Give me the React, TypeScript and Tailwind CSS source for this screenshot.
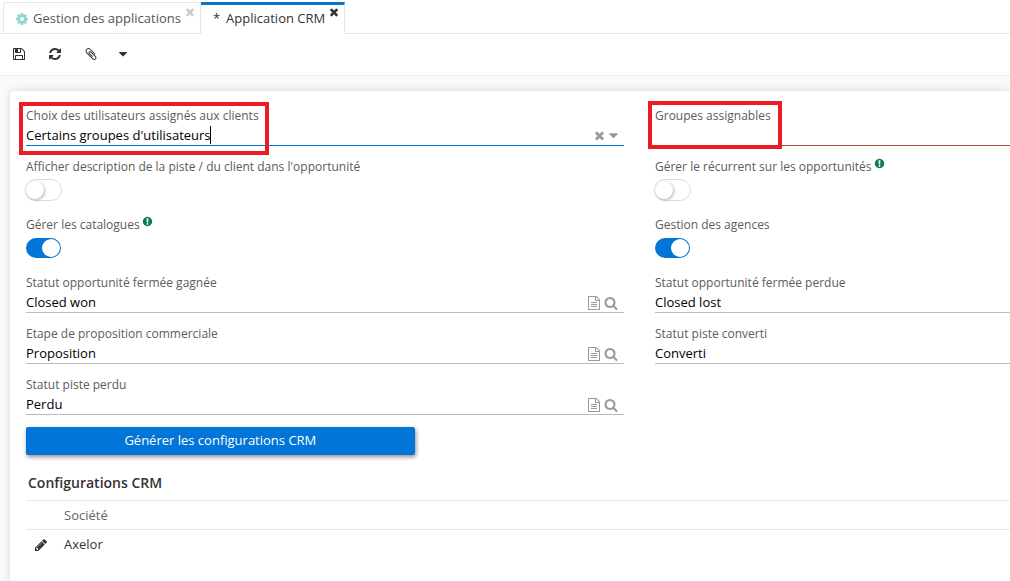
import React, { ReactNode, useId, useState } from "react";

const paths = {
  times:
    "M1490 1322q0 40-28 68l-136 136q-28 28-68 28t-68-28l-294-294-294 294q-28 28-68 28t-68-28l-136-136q-28-28-28-68t28-68l294-294-294-294q-28-28-28-68t28-68l136-136q28-28 68-28t68 28l294 294 294-294q28-28 68-28t68 28l136 136q28 28 28 68t-28 68l-294 294 294 294q28 28 28 68z",
  search:
    "M1216 832q0-185-131.5-316.5t-316.5-131.5-316.5 131.5-131.5 316.5 131.5 316.5 316.5 131.5 316.5-131.5 131.5-316.5zm512 832q0 52-38 90t-90 38q-54 0-90-38l-343-342q-179 124-399 124-143 0-273.5-55.5t-225-150-150-225-55.5-273.5 55.5-273.5 150-225 225-150 273.5-55.5 273.5 55.5 225 150 150 225 55.5 273.5q0 220-124 399l343 343q37 37 37 90z",
  refresh:
    "M1639 1056q0 5-1 7-64 268-268 434.5t-478 166.5q-146 0-282.5-55t-243.5-157l-129 129q-19 19-45 19t-45-19-19-45v-448q0-26 19-45t45-19h448q26 0 45 19t19 45-19 45l-137 137q71 66 161 102t187 36q134 0 250-65t186-179q11-17 53-117 8-23 30-23h192q13 0 22.5 9.5t9.5 22.5zm25-800v448q0 26-19 45t-45 19h-448q-26 0-45-19t-19-45 19-45l138-138q-148-137-349-137-134 0-250 65t-186 179q-11 17-53 117-8 23-30 23h-199q-13 0-22.5-9.5t-9.5-22.5v-7q65-268 270-434.5t480-166.5q146 0 284 55.5t245 156.5l130-129q19-19 45-19t45 19 19 45z",
  cog: "M1152 896q0-106-75-181t-181-75-181 75-75 181 75 181 181 75 181-75 75-181zm512-109v222q0 12-8 23t-20 13l-185 28q-19 54-39 91 35 50 107 138 10 12 10 25t-9 23q-27 37-99 108t-94 71q-12 0-26-9l-138-108q-44 23-91 38-16 136-29 186-7 28-36 28h-222q-14 0-24.5-8.5t-11.5-21.5l-28-184q-49-16-90-37l-141 107q-10 9-25 9-14 0-25-11-126-114-165-168-7-10-7-23 0-12 8-23 15-21 51-66.5t54-70.5q-27-50-41-99l-183-27q-13-2-21-12.5t-8-23.5v-222q0-12 8-23t19-13l186-28q14-46 39-92-40-57-107-138-10-12-10-24 0-10 9-23 26-36 98.5-107.5t94.5-71.5q13 0 26 10l138 107q44-23 91-38 16-136 29-186 7-28 36-28h222q14 0 24.5 8.5t11.5 21.5l28 184q49 16 90 37l142-107q9-9 24-9 13 0 25 10 129 119 165 170 7 8 7 22 0 12-8 23-15 21-51 66.5t-54 70.5q26 50 41 98l183 28q13 2 21 12.5t8 23.5z",
  save: "M512 1536h768v-384h-768v384zm896 0h128v-896q0-14-10-38.5t-20-34.5l-281-281q-10-10-34-20t-39-10v416q0 40-28 68t-68 28h-576q-40 0-68-28t-28-68v-416h-128v1280h128v-416q0-40 28-68t68-28h832q40 0 68 28t28 68v416zm-384-928v-320q0-13-9.5-22.5t-22.5-9.5h-192q-13 0-22.5 9.5t-9.5 22.5v320q0 13 9.5 22.5t22.5 9.5h192q13 0 22.5-9.5t9.5-22.5zm640 32v928q0 40-28 68t-68 28h-1344q-40 0-68-28t-28-68v-1344q0-40 28-68t68-28h928q40 0 88 20t76 48l280 280q28 28 48 76t20 88z",
  file: "M1596 380q28 28 48 76t20 88v1152q0 40-28 68t-68 28h-1344q-40 0-68-28t-28-68v-1600q0-40 28-68t68-28h896q40 0 88 20t76 48zm-444-244v376h376q-10-29-22-41l-313-313q-12-12-41-22zm384 1528v-1024h-416q-40 0-68-28t-28-68v-416h-768v1536h1280zm-1024-864q0-14 9-23t23-9h704q14 0 23 9t9 23v64q0 14-9 23t-23 9h-704q-14 0-23-9t-9-23v-64zm736 224q14 0 23 9t9 23v64q0 14-9 23t-23 9h-704q-14 0-23-9t-9-23v-64q0-14 9-23t23-9h704zm0 256q14 0 23 9t9 23v64q0 14-9 23t-23 9h-704q-14 0-23-9t-9-23v-64q0-14 9-23t23-9h704z",
  pencil:
    "M491 1536l91-91-235-235-91 91v107h128v128h107zm523-928q0-22-22-22-10 0-17 7l-542 542q-7 7-7 17 0 22 22 22 10 0 17-7l542-542q7-7 7-17zm-54-192l416 416-832 832h-416v-416zm683 96q0 53-37 90l-166 166-416-416 166-165q36-38 90-38 53 0 91 38l235 234q37 39 37 91z",
  paperclip:
    "M1596 1385q0 117-79 196t-196 79q-135 0-235-100l-777-776q-113-115-113-271 0-159 110-270t269-111q158 0 273 113l605 606q10 10 10 22 0 16-30.5 46.5t-46.5 30.5q-13 0-23-10l-606-607q-79-77-181-77-106 0-179 75t-73 181q0 105 76 181l776 777q63 63 145 63 64 0 106-42t42-106q0-82-63-145l-581-581q-26-24-60-24-29 0-48 19t-19 48q0 32 25 59l410 410q10 10 10 22 0 16-31 47t-47 31q-12 0-22-10l-410-410q-63-61-63-149 0-82 57-139t139-57q88 0 149 63l581 581q100 98 100 235z",
  info: "M896 128q209 0 385.5 103t279.5 279.5 103 385.5-103 385.5-279.5 279.5-385.5 103-385.5-103-279.5-279.5-103-385.5 103-385.5 279.5-279.5 385.5-103zm128 1247v-190q0-14-9-23.5t-22-9.5h-192q-13 0-23 10t-10 23v190q0 13 10 23t23 10h192q13 0 22-9.5t9-23.5zm-2-344l18-621q0-12-10-18-10-8-24-8h-220q-14 0-24 8-10 6-10 18l17 621q0 10 10 17.5t24 7.5h185q14 0 23.5-7.5t10.5-17.5z",
  caret:
    "M1408 704q0 26-19 45l-448 448q-19 19-45 19t-45-19l-448-448q-19-19-19-45t19-45 45-19h896q26 0 45 19t19 45z",
};

function Icon({ name, className }: { name: keyof typeof paths; className: string }) {
  return (
    <svg viewBox="0 0 1792 1792" className={`shrink-0 fill-current ${className}`} aria-hidden="true">
      <path d={paths[name]} />
    </svg>
  );
}

function IconButton({ label, children, className = "" }: { label: string; children: ReactNode; className?: string }) {
  return (
    <button type="button" aria-label={label} className={`flex items-center justify-center ${className}`}>
      {children}
    </button>
  );
}

const lineColors = {
  normal: "border-[#bbbbbb]",
  focus: "border-[#0275d8]",
  error: "border-[#b94a48]",
};

function TextField({
  label,
  value,
  line = "normal",
  actions,
  overlay,
}: {
  label: string;
  value: string;
  line?: keyof typeof lineColors;
  actions?: ReactNode;
  overlay?: ReactNode;
}) {
  const id = useId();
  const [text, setText] = useState(value);
  return (
    <div className="relative">
      <label htmlFor={id} className="block h-5 text-[12px] leading-5 text-[#5c5c5c]">
        {label}
      </label>
      <div className={`flex h-5 items-center border-b ${lineColors[line]}`}>
        <input
          id={id}
          value={text}
          onChange={(e) => setText(e.target.value)}
          className="h-full min-w-0 flex-1 bg-transparent pb-[2px] text-black outline-none"
        />
        {actions}
      </div>
      {overlay}
    </div>
  );
}

function Toggle({ label, on = false, help = false }: { label: string; on?: boolean; help?: boolean }) {
  const id = useId();
  return (
    <div className="h-[47px]">
      <div className="flex h-5 gap-[2px]">
        <label htmlFor={id} className="text-[12px] leading-5 text-[#5c5c5c]">
          {label}
        </label>
        {help && <Icon name="info" className="mt-px size-[11px] text-[#0b7d4b]" />}
      </div>
      <input
        id={id}
        type="checkbox"
        role="switch"
        defaultChecked={on}
        className="-ml-px mt-[2px] block h-[22px] w-[37px] appearance-none rounded-full border border-[#dddddd] bg-white before:block before:size-[18px] before:translate-y-px before:rounded-full before:bg-white before:shadow-[1px_1px_3px_rgba(0,0,0,0.3)] checked:border-transparent checked:bg-[#0275d8] checked:bg-clip-padding checked:before:translate-x-4 checked:before:shadow-none"
      />
    </div>
  );
}

const lookupActions = (
  <div className="flex gap-[3px] pr-[6px] text-[#999999]">
    <IconButton label="Ouvrir">
      <Icon name="file" className="size-[14px]" />
    </IconButton>
    <IconButton label="Rechercher">
      <Icon name="search" className="size-[14px]" />
    </IconButton>
  </div>
);

export default function App() {
  return (
    <div className="flex min-h-screen flex-col overflow-x-hidden bg-[#fafafa] font-['Open_Sans',sans-serif] text-[13px] text-[#333333]">
      <nav className="flex h-[34px] items-stretch border-b border-[#e7e7e7] bg-white pl-[3px]">
        <div className="mt-[2px] flex rounded-tl-xs border border-b-0 border-[#e7e7e7] pl-[11px] pr-1">
          <a href="#applications" className="flex items-center gap-1 pt-px text-[#555555]">
            <Icon name="cog" className="size-[14px] text-[#8fd6d0]" />
            Gestion des applications
          </a>
          <IconButton label="Fermer Gestion des applications" className="ml-[3px] mt-[3px] h-3 text-[#cccccc]">
            <Icon name="times" className="size-[12px]" />
          </IconButton>
        </div>
        <div className="-mb-px mt-[2px] flex border-r border-t-3 border-r-[#e7e7e7] border-t-[#0275d8] bg-white pl-3 pr-1">
          <a href="#crm" aria-current="page" className="flex items-center gap-[6px] pb-px">
            <span>*</span>
            Application CRM
          </a>
          <IconButton label="Fermer Application CRM" className="ml-[3px] mt-px h-3">
            <Icon name="times" className="size-[12px]" />
          </IconButton>
        </div>
      </nav>

      <div className="flex h-[42px] items-center gap-[22px] border-b border-[#eeeeee] bg-white pb-[2px] pl-3">
        <IconButton label="Enregistrer">
          <Icon name="save" className="size-[14px]" />
        </IconButton>
        <IconButton label="Actualiser">
          <Icon name="refresh" className="size-[14px]" />
        </IconButton>
        <IconButton label="Pièces jointes">
          <Icon name="paperclip" className="size-[14px]" />
        </IconButton>
        <IconButton label="Plus" className="-ml-1">
          <Icon name="caret" className="size-[14px]" />
        </IconButton>
      </div>

      <main className="ml-[10px] mt-[15px] flex-1 rounded-tl-sm bg-white pl-4 pt-[15px] shadow-[0_0_8px_rgba(0,0,0,0.15)]">
        <form onSubmit={(e) => e.preventDefault()} className="grid grid-cols-[598fr_355fr] gap-x-[31px] gap-y-[11px]">
          <TextField
            label="Choix des utilisateurs assignés aux clients"
            value="Certains groupes d'utilisateurs"
            line="focus"
            actions={
              <div className="flex pr-[3px] text-[#999999]">
                <IconButton label="Effacer">
                  <Icon name="times" className="size-[13px]" />
                </IconButton>
                <IconButton label="Afficher les choix">
                  <Icon name="caret" className="size-[15px]" />
                </IconButton>
              </div>
            }
            overlay={
              <>
                <span className="absolute left-[184px] top-5 h-[18px] w-px bg-black" />
                <span className="pointer-events-none absolute -left-[7px] -top-1 h-[53px] w-[250px] border-4 border-[#ed1c24]" />
              </>
            }
          />
          <TextField
            label="Groupes assignables"
            value=""
            line="error"
            overlay={
              <span className="pointer-events-none absolute -left-[7px] -top-[5px] h-12 w-[134px] border-4 border-[#ed1c24]" />
            }
          />
          <Toggle label="Afficher description de la piste / du client dans l'opportunité" />
          <Toggle label="Gérer le récurrent sur les opportunités" help />
          <Toggle label="Gérer les catalogues" on help />
          <Toggle label="Gestion des agences" on />
          <TextField label="Statut opportunité fermée gagnée" value="Closed won" actions={lookupActions} />
          <TextField label="Statut opportunité fermée perdue" value="Closed lost" />
          <TextField label="Etape de proposition commerciale" value="Proposition" actions={lookupActions} />
          <TextField label="Statut piste converti" value="Converti" />
          <TextField label="Statut piste perdu" value="Perdu" actions={lookupActions} />
          <button
            type="button"
            className="col-start-1 mt-px h-7 w-[65%] rounded-xs bg-[#0275d8] pb-px text-white shadow-[1px_2px_4px_rgba(0,0,0,0.45)]"
          >
            Générer les configurations CRM
          </button>
        </form>

        <section className="mt-4">
          <h2 className="h-[29px] pl-[2px] text-[14px] font-semibold leading-6">Configurations CRM</h2>
          <table className="w-full border-collapse text-left">
            <thead>
              <tr className="h-[29px] border-y border-[#e7e7e7]">
                <th className="w-[38px]" aria-label="Actions" />
                <th className="pt-[2px] font-normal text-[#666666]">Société</th>
              </tr>
            </thead>
            <tbody>
              <tr className="h-[30px]">
                <td>
                  <IconButton label="Modifier Axelor" className="ml-2">
                    <Icon name="pencil" className="size-[14px]" />
                  </IconButton>
                </td>
                <td>Axelor</td>
              </tr>
            </tbody>
          </table>
        </section>
      </main>
    </div>
  );
}
